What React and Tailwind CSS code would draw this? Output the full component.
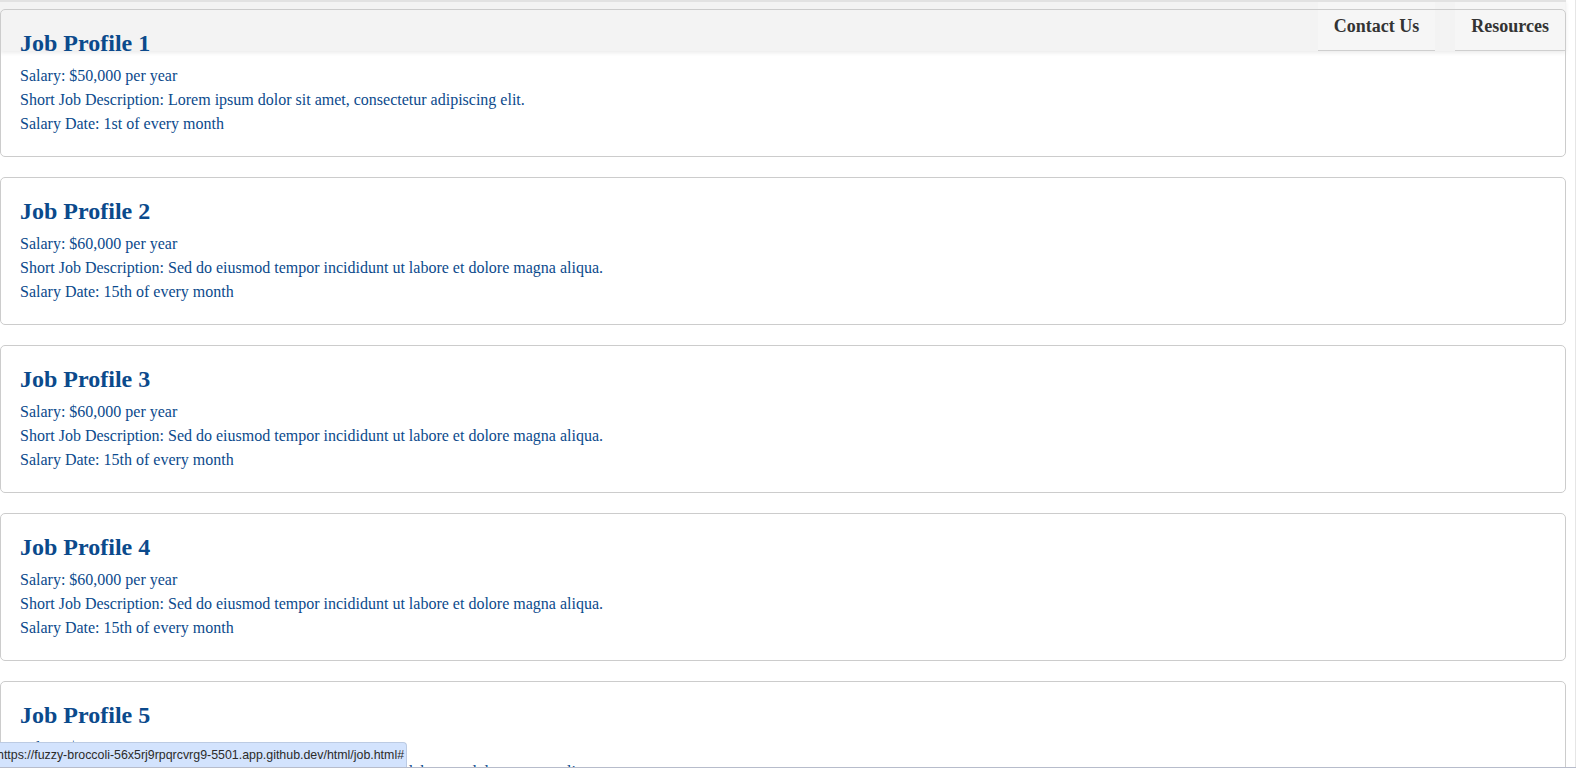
import React from 'react';

const jobs = [
  {
    title: 'Job Profile 1',
    salary: '$50,000 per year',
    desc: 'Lorem ipsum dolor sit amet, consectetur adipiscing elit.',
    date: '1st of every month',
  },
  {
    title: 'Job Profile 2',
    salary: '$60,000 per year',
    desc: 'Sed do eiusmod tempor incididunt ut labore et dolore magna aliqua.',
    date: '15th of every month',
  },
  {
    title: 'Job Profile 3',
    salary: '$60,000 per year',
    desc: 'Sed do eiusmod tempor incididunt ut labore et dolore magna aliqua.',
    date: '15th of every month',
  },
  {
    title: 'Job Profile 4',
    salary: '$60,000 per year',
    desc: 'Sed do eiusmod tempor incididunt ut labore et dolore magna aliqua.',
    date: '15th of every month',
  },
  {
    title: 'Job Profile 5',
    salary: '$60,000 per year',
    desc: 'Sed do eiusmod tempor incididunt ut labore et dolore magna aliqua.',
    date: '15th of every month',
  },
];

const JobCard = ({ job }) => (
  <div className="border border-[#cccccc] rounded-[5px] px-[19px] pt-[19px] pb-[20px] text-[#0b4a8c]">
    <h2 className="text-[24px] font-bold leading-[28px] mb-[7px]">{job.title}</h2>
    <p className="text-[16px] leading-[24px]">Salary: {job.salary}</p>
    <p className="text-[16px] leading-[24px]">Short Job Description: {job.desc}</p>
    <p className="text-[16px] leading-[24px]">Salary Date: {job.date}</p>
  </div>
);

export default function App() {
  return (
    <div className="relative h-[768px] overflow-hidden bg-white font-['Liberation_Serif','Times_New_Roman',serif]">
      {/* barre de navigation (sous les cartes) */}
      <header className="absolute top-0 left-0 w-[1566px] h-[51px] bg-[#f3f3f3] border-t-2 border-[#e2e2e2] shadow-[0_2px_4px_rgba(0,0,0,0.08)] flex justify-end items-start gap-[20px] pr-[1px]">
        <a href="#" className="h-[49px] px-[16px] bg-[#f6f6f6] border-b border-[#cfcfcf] flex items-center text-[18px] font-bold text-[#333333]">
          Contact Us
        </a>
        <a href="#" className="h-[49px] px-[16px] bg-[#f6f6f6] border-b border-[#cfcfcf] flex items-center text-[18px] font-bold text-[#333333]">
          Resources
        </a>
      </header>

      <div className="relative flex">
        {/* liste des offres */}
        <main className="w-[1566px] shrink-0 pt-[9px] flex flex-col gap-[20px]">
          {jobs.map((job) => (
            <JobCard key={job.title} job={job} />
          ))}
        </main>
        <div className="flex-1 h-[768px] border-r border-[#e6e6e6]" />
      </div>

      {/* bulle d'état du navigateur */}
      <div className="absolute left-0 bottom-[1px] h-[25px] w-[407px] bg-[#d3e3fd] border-t border-r border-[#bccbe3] rounded-tr-[4px] flex items-center overflow-hidden">
        <span className="ml-[-3px] whitespace-nowrap text-[12.4px] text-[#2b2b2b] font-['Liberation_Sans','Arial',sans-serif]">
          https://fuzzy-broccoli-56x5rj9rpqrcvrg9-5501.app.github.dev/html/job.html#
        </span>
      </div>
      <div className="absolute left-0 bottom-0 w-full h-[1px] bg-[#b7bccb]" />
    </div>
  );
}
